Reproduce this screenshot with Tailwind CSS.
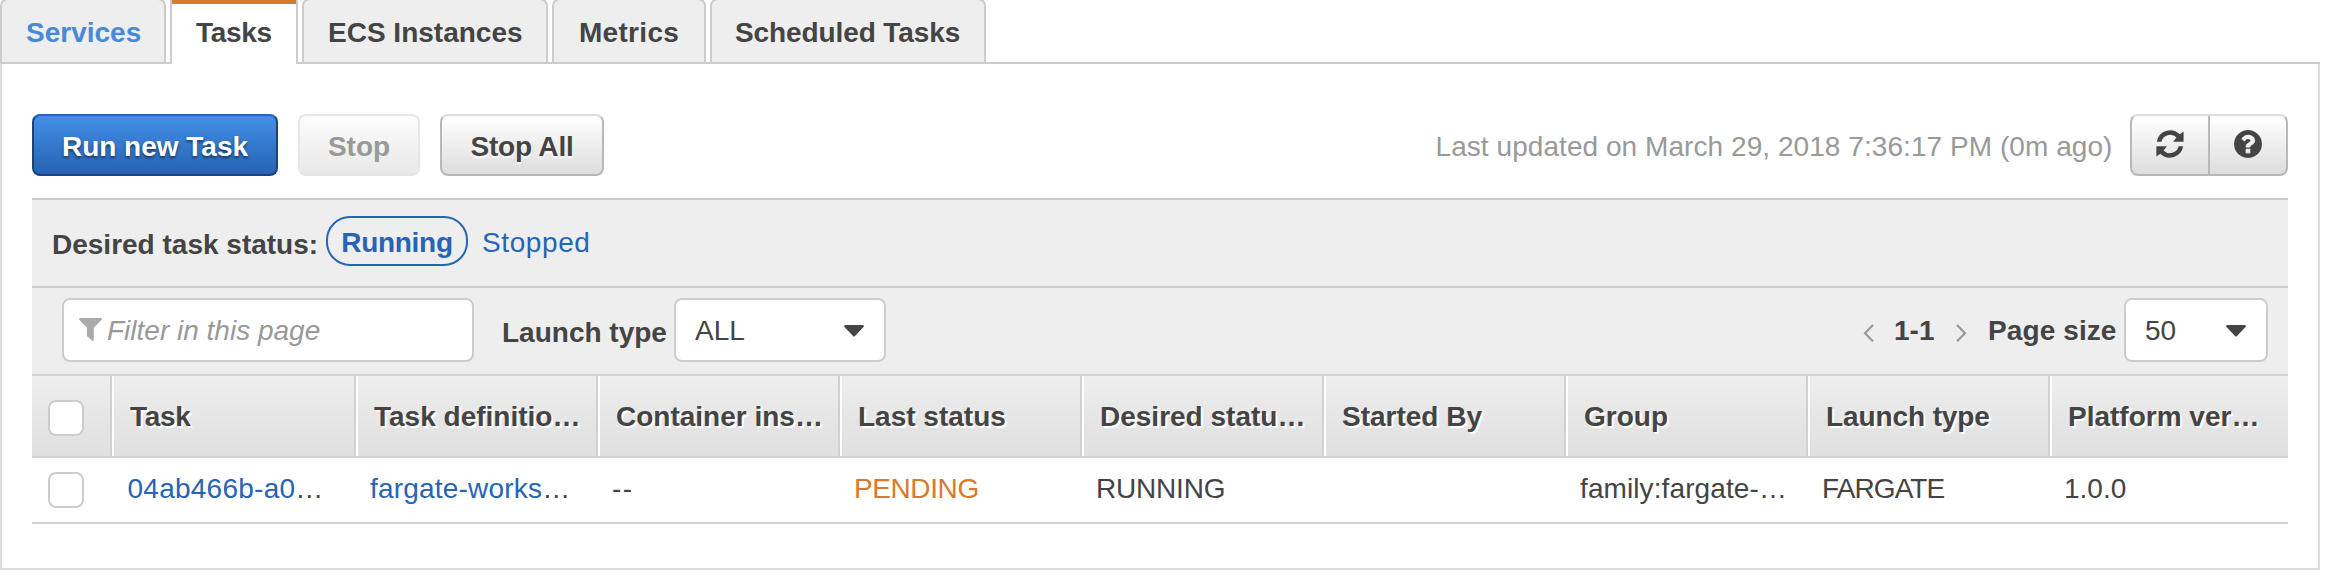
<!DOCTYPE html>
<html lang="en">
<head>
<meta charset="utf-8">
<title>Tasks</title>
<script src="https://cdn.jsdelivr.net/npm/@tailwindcss/browser@4"></script>
</head>
<body class="h-[578px] overflow-hidden bg-white font-['Liberation_Sans',Arial,sans-serif] text-[28px] leading-[33px] text-[#444] whitespace-nowrap">
<div class="w-[2320px] h-[570px] flex flex-col">

  <!-- Tabs -->
  <nav class="h-16 shrink-0 flex items-end gap-1 border-b-2 border-[#ccc] font-bold">
    <a class="h-16 w-[166px] border-2 border-b-0 border-[#ccc] rounded-t-lg bg-[#eee] pt-4 pl-6 text-[#4688da]">Services</a>
    <a class="h-16 w-32 -mb-0.5 border-x-2 border-[#ccc] bg-white flex flex-col">
      <span class="h-1 shrink-0 bg-[#d67b2d]"></span>
      <span class="pt-3 pl-6 tracking-[-0.3px]">Tasks</span>
    </a>
    <a class="h-16 w-[246px] border-2 border-b-0 border-[#ccc] rounded-t-lg bg-[#eee] pt-4 pl-6">ECS Instances</a>
    <a class="h-16 w-[154px] border-2 border-b-0 border-[#ccc] rounded-t-lg bg-[#eee] pt-4 pl-[25px] tracking-[0.3px]">Metrics</a>
    <a class="h-16 w-[276px] border-2 border-b-0 border-[#ccc] rounded-t-lg bg-[#eee] pt-4 pl-[23px] tracking-[-0.1px]">Scheduled Tasks</a>
  </nav>

  <main class="grow border-2 border-t-0 border-[#ddd] px-[30px] pt-[50px]">
    <!-- Actions -->
    <div class="h-[84px] flex items-start">
      <button class="w-[246px] h-[62px] rounded-lg border-2 border-[#1a4479] border-t-[#2765b5] bg-linear-to-b from-[#438fe8] to-[#2763b2] pt-3.5 pb-[13px] text-white font-bold [text-shadow:0_2px_3px_#0008]">Run new Task</button>
      <button class="ml-5 w-[122px] h-[62px] rounded-lg border-2 border-[#e6e6e6] bg-linear-to-b from-[#fdfdfd] to-[#e8e8e8] pt-3.5 pb-[13px] text-[#999] font-bold">Stop</button>
      <button class="ml-5 w-[164px] h-[62px] rounded-lg border-2 border-[#b8b8b8] border-t-[#ddd] bg-linear-to-b from-white to-[#ddd] pt-3.5 pb-[13px] font-bold tracking-[-0.2px] [text-shadow:0_2px_2px_#fff]">Stop All</button>
      <span class="ml-auto mt-4 mr-[17.5px] text-[#999] tracking-[0.06px]">Last updated on March 29, 2018 7:36:17 PM (0m ago)</span>
      <div class="w-[158px] h-[62px] rounded-lg border-2 border-[#b8b8b8] border-t-[#ddd] bg-linear-to-b from-white to-[#ddd] flex">
        <div class="w-[78px] border-r-2 border-[#b8b8b8] pt-3.5 pl-6">
          <svg class="size-7" viewBox="0 0 28 28" fill="#444"><path id="arc" d="M.8 11.7A13.6 13.6 0 0 1 23.6 4.2L27.6 1.4V11.7H17.1L20.5 7.4A9 9 0 0 0 5.4 11.7Z"/><use href="#arc" transform="rotate(180 14 14)"/></svg>
        </div>
        <div class="grow pt-3.5 pl-6">
          <svg class="size-7" viewBox="128 128 1536 1536" fill="#444"><path d="M1024 1376v-192q0-14-9-23t-23-9h-192q-14 0-23 9t-9 23v192q0 14 9 23t23 9h192q14 0 23-9t9-23zm256-672q0-88-55.5-163t-138.5-116-170-41q-243 0-371 213-15 24 8 42l132 100q7 6 19 6 16 0 25-12 53-68 86-92 34-24 86-24 48 0 85.5 26t37.5 59q0 38-20 61t-68 45q-63 28-115.5 86.5t-52.5 125.5v36q0 14 9 23t23 9h192q14 0 23-9t9-23q0-19 21.5-49.5t54.5-49.5q32-18 49-28.5t46-35 44.5-48 28-60.5 12.5-81zm384 192q0 209-103 385.5t-279.5 279.5-385.5 103-385.5-103-279.5-279.5-103-385.5 103-385.5 279.5-279.5 385.5-103 385.5 103 279.5 279.5 103 385.5z"/></svg>
        </div>
      </div>
    </div>

    <!-- Status filter -->
    <div class="h-[88px] border-t-2 border-[#ccc] bg-[#eee] flex items-start pl-5">
      <span class="mt-7 w-[274px] font-bold">Desired task status:</span>
      <a class="mt-4 w-[142px] h-[50px] rounded-3xl border-2 border-[#2664b5] pt-2 text-center font-bold text-[#2664b5] tracking-[-0.3px]">Running</a>
      <a class="mt-[26px] ml-3.5 text-[#2664b5] tracking-[0.6px]">Stopped</a>
    </div>

    <!-- Filter and paging -->
    <div class="h-[88px] border-t-2 border-[#ccc] bg-[#eee] flex items-start pl-[30px] pr-5">
      <div class="mt-2.5 w-[412px] h-16 rounded-lg border-2 border-[#ccc] bg-white flex items-start pl-[14.5px]">
        <svg class="mt-[18px] w-[23px] h-[23px]" viewBox="0 0 23 23" fill="#aaa"><path d="M1 0H22.2Q23.4.6 22.6 1.8L14.8 9.8V22.2Q14.4 23.4 13.4 22.8L8.4 18.5Q8 18 8 17.5V9.8L.3 1.8Q-.3.5 1 0Z"/></svg>
        <span class="mt-3.5 ml-[5.5px] italic text-[#999]">Filter in this page</span>
      </div>
      <span class="mt-7 ml-7 w-[172px] font-bold">Launch type</span>
      <div class="mt-2.5 w-[212px] h-16 rounded-lg border-2 border-[#ccc] bg-white flex items-start justify-between pl-[19px] pr-5">
        <span class="mt-3.5">ALL</span>
        <svg class="mt-[24.5px] w-5 h-3" viewBox="0 0 20 12" fill="#444"><path d="M1 0H19Q20.4.6 19.5 2L11 11Q10 12 9 11L.5 2Q-.4.6 1 0Z"/></svg>
      </div>
      <div class="ml-auto flex items-start">
        <svg class="mt-9 w-[11px] h-[18px]" viewBox="0 0 11 18" fill="none" stroke="#999" stroke-width="2.2"><path d="M10 1 2 9.2 10 17.3"/></svg>
        <span class="mt-[26px] ml-5 w-[62px] font-bold">1-1</span>
        <svg class="mt-9 w-[11px] h-[18px]" viewBox="0 0 11 18" fill="none" stroke="#999" stroke-width="2.2"><path d="M1 1 9 9.2 1 17.3"/></svg>
        <span class="mt-[26px] ml-[21px] w-[136px] font-bold tracking-[0.1px]">Page size</span>
        <div class="mt-2.5 w-36 h-16 rounded-lg border-2 border-[#ccc] bg-white flex items-start justify-between pl-[19px] pr-5">
          <span class="mt-3.5">50</span>
          <svg class="mt-[24.5px] w-5 h-3" viewBox="0 0 20 12" fill="#444"><path d="M1 0H19Q20.4.6 19.5 2L11 11Q10 12 9 11L.5 2Q-.4.6 1 0Z"/></svg>
        </div>
      </div>
    </div>

    <!-- Task table -->
    <div class="h-[84px] border-y-2 border-[#d3d3d3] bg-linear-to-b from-[#eee] to-[#dfdfdf] grid grid-cols-[80px_244px_repeat(7,242px)_238px] font-bold [text-shadow:2px_2px_0_#fff]">
      <div class="border-r-2 border-[#d0d0d0] pt-6 pl-4"><div class="size-9 rounded-lg border-2 border-[#ccc] bg-white"></div></div>
      <div class="border-l-2 border-l-white border-r-2 border-r-[#d0d0d0] pt-6 pl-4 tracking-[-0.3px]">Task</div>
      <div class="border-l-2 border-l-white border-r-2 border-r-[#d0d0d0] pt-6 pl-4">Task definitio…</div>
      <div class="border-l-2 border-l-white border-r-2 border-r-[#d0d0d0] pt-6 pl-4">Container ins…</div>
      <div class="border-l-2 border-l-white border-r-2 border-r-[#d0d0d0] pt-6 pl-4">Last status</div>
      <div class="border-l-2 border-l-white border-r-2 border-r-[#d0d0d0] pt-6 pl-4">Desired statu…</div>
      <div class="border-l-2 border-l-white border-r-2 border-r-[#d0d0d0] pt-6 pl-4">Started By</div>
      <div class="border-l-2 border-l-white border-r-2 border-r-[#d0d0d0] pt-6 pl-4">Group</div>
      <div class="border-l-2 border-l-white border-r-2 border-r-[#d0d0d0] pt-6 pl-4 tracking-[-0.1px]">Launch type</div>
      <div class="border-l-2 border-l-white pt-6 pl-4">Platform ver…</div>
    </div>
    <div class="h-[66px] border-b-2 border-[#d3d3d3] grid grid-cols-[80px_244px_repeat(7,242px)_238px]">
      <div class="pt-3.5 pl-4"><div class="size-9 rounded-lg border-2 border-[#ccc] bg-white"></div></div>
      <div class="pt-3.5 pl-[15.5px]"><a class="text-[#2664b5] tracking-[0.25px]">04ab466b-a0</a>…</div>
      <div class="pt-3.5 pl-3.5"><a class="text-[#2664b5] tracking-[0.2px]">fargate-works</a>…</div>
      <div class="pt-3.5 pl-3.5 tracking-[1.5px]">--</div>
      <div class="pt-3.5 pl-3.5 text-[#d67b2d] tracking-[-0.4px]">PENDING</div>
      <div class="pt-3.5 pl-3.5 tracking-[-0.2px]">RUNNING</div>
      <div class="pt-3.5"></div>
      <div class="pt-3.5 pl-3.5 tracking-[0.1px]">family:fargate-…</div>
      <div class="pt-3.5 pl-3.5 tracking-[-0.9px]">FARGATE</div>
      <div class="pt-3.5 pl-3.5">1.0.0</div>
    </div>
  </main>
</div>
</body>
</html>
